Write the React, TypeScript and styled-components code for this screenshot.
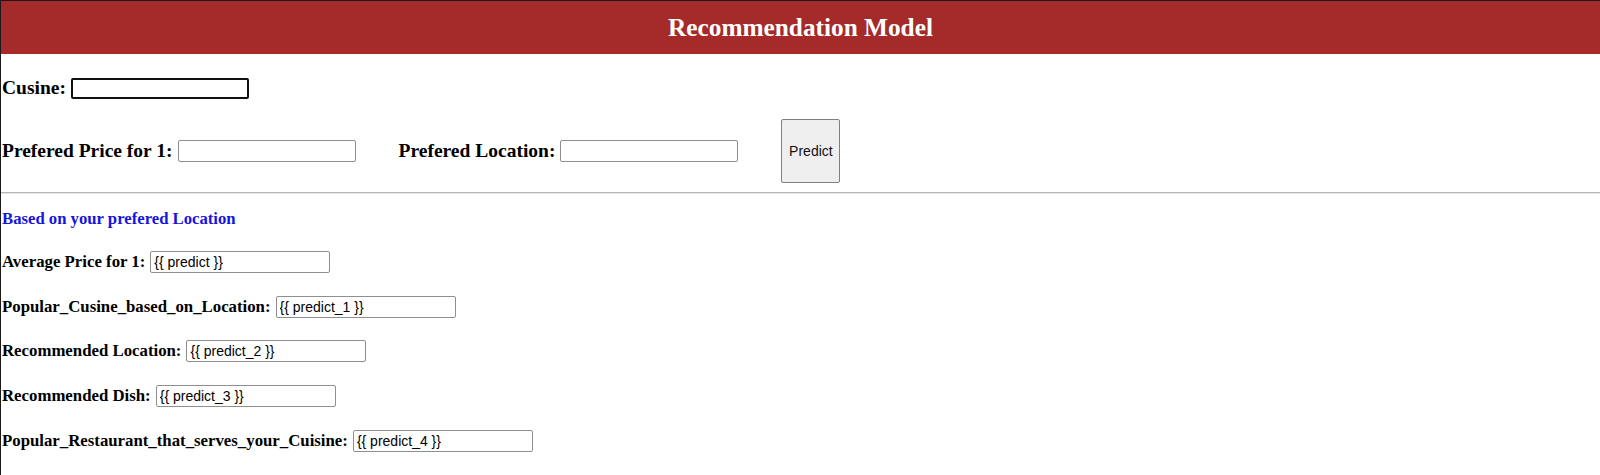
import { createGlobalStyle } from 'styled-components';
import styled from 'styled-components';

const GlobalStyle = createGlobalStyle`
  html, body {
    margin: 0;
    padding: 0;
    background: #fff;
  }
  body {
    font-family: 'Liberation Serif', 'Times New Roman', serif;
  }
`;

const Page = styled.div`
  min-height: 475px;
  box-sizing: border-box;
  border-top: 1px solid #1a1a1a;
  border-left: 1px solid #1a1a1a;
`;

const Header = styled.header`
  height: 53px;
  background-color: #a52a2a;
  display: flex;
  align-items: center;
  justify-content: center;
`;

const Title = styled.h1`
  margin: 0;
  color: #fff;
  font-size: 25.3px;
  font-weight: 700;
`;

const Form = styled.form`
  display: flex;
  flex-direction: column;
  padding: 23px 0 0 1px;
`;

const Row = styled.div<{ $gap?: number }>`
  display: flex;
  align-items: center;
  gap: ${(p) => p.$gap ?? 0}px;
`;

const Field = styled.div`
  display: flex;
  align-items: center;
  gap: 5px;
`;

const BigLabel = styled.label`
  font-size: 19.5px;
  font-weight: 700;
  color: #000;
`;

const TextInput = styled.input<{ $focused?: boolean }>`
  box-sizing: border-box;
  width: 178px;
  height: ${(p) => (p.$focused ? 21 : 22)}px;
  padding: 1px 3px;
  font-family: 'Liberation Sans', Arial, sans-serif;
  font-size: 14px;
  color: #000;
  background: #fff;
  border: ${(p) => (p.$focused ? '2px solid #101010' : '1px solid #8f8f8f')};
  border-radius: 2px;
  outline: none;
`;

const PredictButton = styled.button`
  box-sizing: border-box;
  width: 59px;
  height: 64px;
  background: #efefef;
  border: 1px solid #808080;
  border-radius: 2px;
  font-family: 'Liberation Sans', Arial, sans-serif;
  font-size: 14px;
  color: #111;
  padding: 0;
`;

const Divider = styled.hr`
  margin: 9px 0 0;
  border: none;
  border-top: 1px solid #b8b8b8;
  border-bottom: 1px solid #e6e6e6;
`;

const Results = styled.section`
  display: flex;
  flex-direction: column;
  gap: 22.75px;
  padding: 15px 0 0 1px;
`;

const SubHeading = styled.h4`
  margin: 0 0 -1px;
  height: 20px;
  line-height: 20px;
  font-size: 16.7px;
  font-weight: 700;
  color: #1515e0;
`;

const ResultLabel = styled.label`
  font-size: 16.8px;
  font-weight: 700;
  color: #000;
`;

const ResultInput = styled(TextInput)`
  width: 180px;
`;

const results = [
  { label: 'Average Price for 1:', value: '{{ predict }}' },
  { label: 'Popular_Cusine_based_on_Location:', value: '{{ predict_1 }}' },
  { label: 'Recommended Location:', value: '{{ predict_2 }}' },
  { label: 'Recommended Dish:', value: '{{ predict_3 }}' },
  { label: 'Popular_Restaurant_that_serves_your_Cuisine:', value: '{{ predict_4 }}' },
];

export default function App() {
  return (
    <Page>
      <GlobalStyle />
      <Header>
        <Title>Recommendation Model</Title>
      </Header>
      <Form onSubmit={(e) => e.preventDefault()}>
        <Row>
          <Field>
            <BigLabel>Cusine:</BigLabel>
            <TextInput $focused />
          </Field>
        </Row>
        <Row $gap={43} style={{ marginTop: 20 }}>
          <Field>
            <BigLabel>Prefered Price for 1:</BigLabel>
            <TextInput />
          </Field>
          <Field>
            <BigLabel>Prefered Location:</BigLabel>
            <TextInput />
          </Field>
          <PredictButton type="submit">Predict</PredictButton>
        </Row>
      </Form>
      <Divider />
      <Results>
        <SubHeading>Based on your prefered Location</SubHeading>
        {results.map((r) => (
          <Field key={r.label}>
            <ResultLabel>{r.label}</ResultLabel>
            <ResultInput readOnly defaultValue={r.value} />
          </Field>
        ))}
      </Results>
    </Page>
  );
}
